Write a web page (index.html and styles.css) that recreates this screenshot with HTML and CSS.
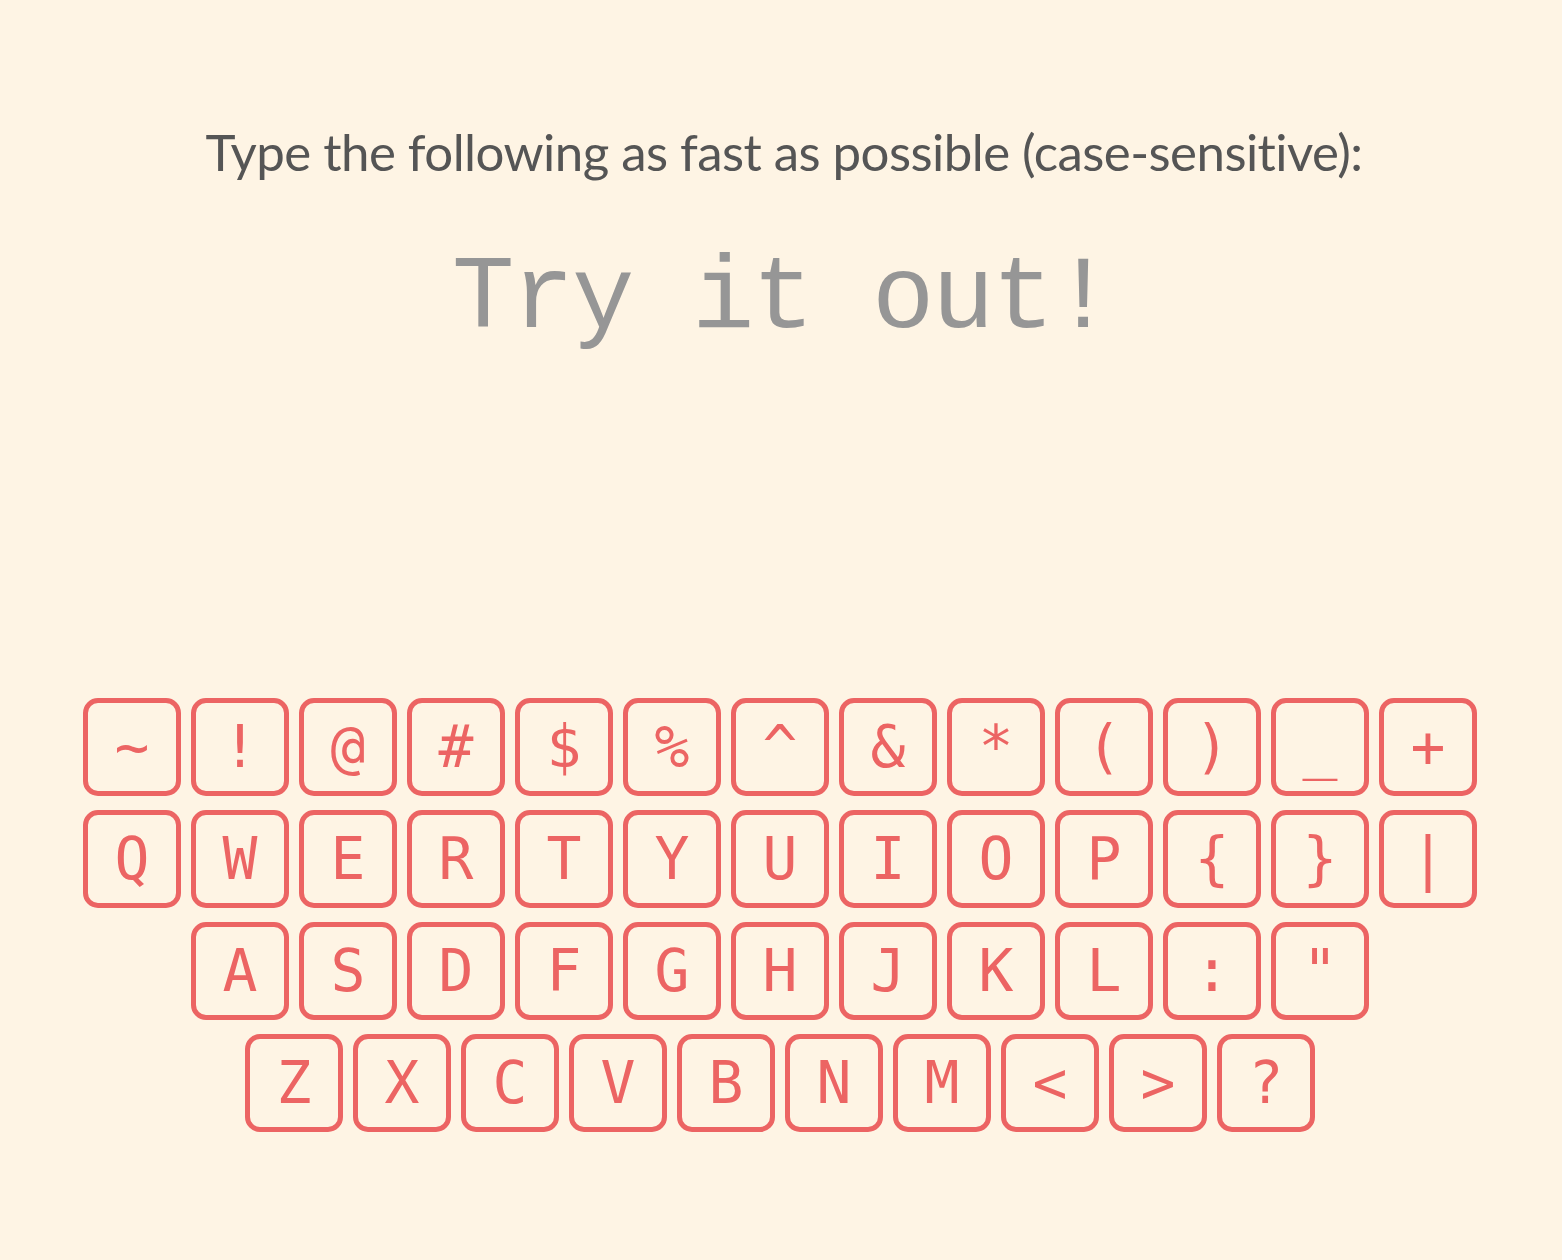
FILE: index.html
```html
<!DOCTYPE html>
<html lang="en">
<head>
<meta charset="utf-8">
<title>Typing test</title>
<link rel="stylesheet" href="styles.css">
</head>
<body>
<main class="page">
  <h1 class="prompt">Type the following as fast as possible (case-sensitive):</h1>
  <div class="target">Try it out!</div>
  <div class="keyboard">
    <div class="row">
      <div class="key">~</div><div class="key">!</div><div class="key">@</div><div class="key">#</div><div class="key">$</div><div class="key">%</div><div class="key">^</div><div class="key">&amp;</div><div class="key">*</div><div class="key">(</div><div class="key">)</div><div class="key">_</div><div class="key">+</div>
    </div>
    <div class="row">
      <div class="key">Q</div><div class="key">W</div><div class="key">E</div><div class="key">R</div><div class="key">T</div><div class="key">Y</div><div class="key">U</div><div class="key">I</div><div class="key">O</div><div class="key">P</div><div class="key">{</div><div class="key">}</div><div class="key">|</div>
    </div>
    <div class="row">
      <div class="key">A</div><div class="key">S</div><div class="key">D</div><div class="key">F</div><div class="key">G</div><div class="key">H</div><div class="key">J</div><div class="key">K</div><div class="key">L</div><div class="key">:</div><div class="key">"</div>
    </div>
    <div class="row">
      <div class="key">Z</div><div class="key">X</div><div class="key">C</div><div class="key">V</div><div class="key">B</div><div class="key">N</div><div class="key">M</div><div class="key">&lt;</div><div class="key">&gt;</div><div class="key">?</div>
    </div>
  </div>
</main>
</body>
</html>
```

FILE: styles.css
```css
html, body {
  margin: 0;
  padding: 0;
  background: #fef4e4;
}

.page {
  display: flex;
  flex-direction: column;
  align-items: center;
  min-height: 1260px;
  padding-right: 2px;
}

.prompt {
  margin: 0;
  padding-top: 121px;
  padding-left: 8px;
  font-family: "Lato", "Liberation Sans", sans-serif;
  font-weight: 400;
  font-size: 51px;
  line-height: normal;
  color: #555555;
  letter-spacing: -0.55px;
}

.target {
  margin-top: 58px;
  padding-left: 4px;
  font-family: "Liberation Mono", monospace;
  font-size: 104px;
  letter-spacing: -2.4px;
  line-height: normal;
  color: #969696;
  white-space: pre;
}

.keyboard {
  margin-top: 340px;
  display: flex;
  flex-direction: column;
  align-items: center;
  gap: 14px;
}

.row {
  display: flex;
  gap: 10px;
}

.key {
  box-sizing: border-box;
  width: 98px;
  height: 98px;
  border: 5px solid #ec6463;
  border-radius: 15px;
  display: flex;
  align-items: center;
  justify-content: center;
  font-family: "DejaVu Sans Mono", monospace;
  font-size: 58px;
  line-height: 1;
  color: #ec6463;
}
```
